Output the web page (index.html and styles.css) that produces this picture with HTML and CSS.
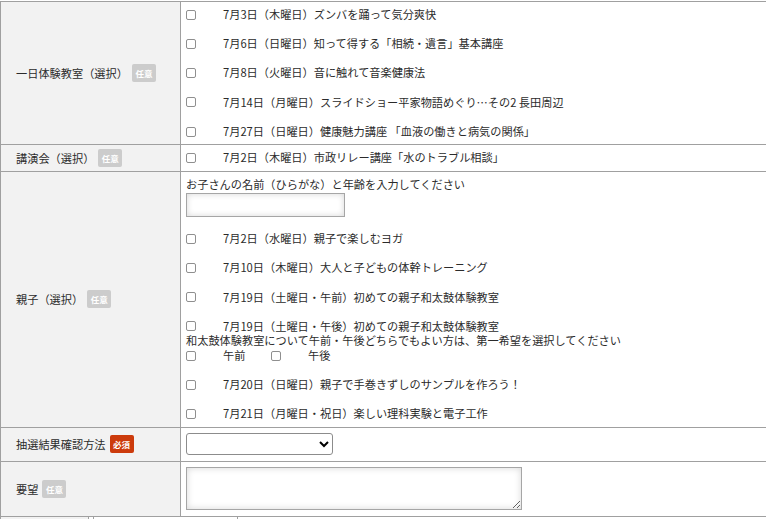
FILE: index.html
```html
<!DOCTYPE html>
<html lang="ja">
<head>
<meta charset="utf-8">
<title>申込フォーム</title>
<link rel="stylesheet" href="styles.css">
</head>
<body>
<div class="page">
  <table class="form">
    <tbody>
      <tr>
        <th><span class="lbl">一日体験教室（選択）</span><span class="badge opt-b">任意</span></th>
        <td>
          <label class="opt"><span class="cb"></span>7月3日（木曜日）ズンバを踊って気分爽快</label>
          <label class="opt"><span class="cb"></span>7月6日（日曜日）知って得する「相続・遺言」基本講座</label>
          <label class="opt"><span class="cb"></span>7月8日（火曜日）音に触れて音楽健康法</label>
          <label class="opt"><span class="cb"></span>7月14日（月曜日）スライドショー平家物語めぐり…その2 長田周辺</label>
          <label class="opt"><span class="cb"></span>7月27日（日曜日）健康魅力講座 「血液の働きと病気の関係」</label>
        </td>
      </tr>
      <tr>
        <th><span class="lbl">講演会（選択）</span><span class="badge opt-b">任意</span></th>
        <td>
          <label class="opt"><span class="cb"></span>7月2日（木曜日）市政リレー講座「水のトラブル相談」</label>
        </td>
      </tr>
      <tr>
        <th><span class="lbl">親子（選択）</span><span class="badge opt-b">任意</span></th>
        <td>
          <div class="line">お子さんの名前（ひらがな）と年齢を入力してください</div>
          <input class="text" type="text">
          <label class="opt"><span class="cb"></span>7月2日（水曜日）親子で楽しむヨガ</label>
          <label class="opt"><span class="cb"></span>7月10日（木曜日）大人と子どもの体幹トレーニング</label>
          <label class="opt"><span class="cb"></span>7月19日（土曜日・午前）初めての親子和太鼓体験教室</label>
          <label class="opt tight"><span class="cb"></span>7月19日（土曜日・午後）初めての親子和太鼓体験教室</label>
          <div class="line">和太鼓体験教室について午前・午後どちらでもよい方は、第一希望を選択してください</div>
          <div class="opt pair">
            <label class="sub"><span class="cb"></span>午前</label>
            <label class="sub"><span class="cb"></span>午後</label>
          </div>
          <label class="opt"><span class="cb"></span>7月20日（日曜日）親子で手巻きずしのサンプルを作ろう！</label>
          <label class="opt"><span class="cb"></span>7月21日（月曜日・祝日）楽しい理科実験と電子工作</label>
        </td>
      </tr>
      <tr>
        <th><span class="lbl">抽選結果確認方法</span><span class="badge req-b">必須</span></th>
        <td class="sel-cell">
          <select class="select"><option></option></select>
        </td>
      </tr>
      <tr>
        <th><span class="lbl">要望</span><span class="badge opt-b">任意</span></th>
        <td class="area-cell">
          <textarea class="area"></textarea>
        </td>
      </tr>
    </tbody>
  </table>
  <div class="foot">
    <div class="f1"></div>
    <div class="f2"></div>
  </div>
</div>
</body>
</html>
```

FILE: styles.css
```css
html, body {
  margin: 0;
  padding: 0;
  background: #fff;
  overflow: hidden;
}
.page {
  padding-top: 1px;
  font-family: "Noto Sans CJK JP", "Noto Sans", sans-serif;
  font-size: 11.2px;
  line-height: 14.6px;
  color: #2b2b2b;
}
.form {
  width: 800px;
  table-layout: fixed;
  border-collapse: separate;
  border-spacing: 0;
  border-top: 1px solid #a0a0a0;
  border-left: 1px solid #a0a0a0;
}
.form th {
  box-sizing: border-box;
  width: 180px;
  background: #f2f2f2;
  text-align: left;
  font-weight: normal;
  vertical-align: middle;
  padding: 0 0 0 15px;
  border-right: 1px solid #a0a0a0;
  border-bottom: 1px solid #a0a0a0;
}
.form td {
  vertical-align: top;
  padding: 5px 5px 6px 5px;
  border-bottom: 1px solid #a0a0a0;
}
.lbl {
  vertical-align: middle;
}
.badge {
  display: inline-flex;
  align-items: center;
  justify-content: center;
  width: 24px;
  height: 18px;
  margin-left: 4px;
  border-radius: 2px;
  color: #fff;
  font-size: 8.5px;
  font-weight: bold;
  vertical-align: middle;
  line-height: 1;
}
.opt-b { background: #cccccc; }
.req-b { background: #cc3b0c; }

.opt {
  display: flex;
  align-items: center;
  height: 14.6px;
  margin-bottom: 14.6px;
  white-space: nowrap;
}
.opt:last-child { margin-bottom: 0; }
.opt.tight { margin-bottom: 0; }
.line {
  height: 14.6px;
  white-space: nowrap;
}
.cb {
  box-sizing: border-box;
  flex: none;
  width: 10px;
  height: 10px;
  margin: 1px 27px 0 0;
  border: 1px solid #8f8f8f;
  border-radius: 2px;
  background: #fff;
}
.pair .sub {
  display: flex;
  align-items: center;
  margin-right: 25.6px;
}
.text {
  display: block;
  box-sizing: border-box;
  width: 159px;
  height: 24px;
  margin: 1px 0 14.6px 0;
  border: 1px solid #a6a6a6;
  background: #fff;
  box-shadow: inset 0 0 6px rgba(0, 0, 0, 0.16);
  padding: 0;
}
.sel-cell { padding: 6px 5px 6px 5px; }
.select {
  display: block;
  box-sizing: border-box;
  width: 147px;
  height: 22px;
  border: 1px solid #8c8c8c;
  border-radius: 3px;
  background: #fff;
  font-family: inherit;
  font-size: 11px;
}
.area-cell { padding: 5px 5px 4px 5px; }
.area {
  display: block;
  box-sizing: border-box;
  width: 336px;
  height: 43px;
  border: 1px solid #a6a6a6;
  background: #fff;
  box-shadow: inset 0 0 7px rgba(0, 0, 0, 0.16);
  padding: 2px;
}
.foot {
  display: flex;
  height: 10px;
}
.f1 {
  width: 87px;
  background: #f2f2f2;
  border-left: 1px solid #a0a0a0;
  border-right: 1px solid #a0a0a0;
}
.f2 {
  width: 143px;
  margin-left: 4px;
  border-left: 1px solid #a0a0a0;
  border-right: 1px solid #a0a0a0;
}
```
